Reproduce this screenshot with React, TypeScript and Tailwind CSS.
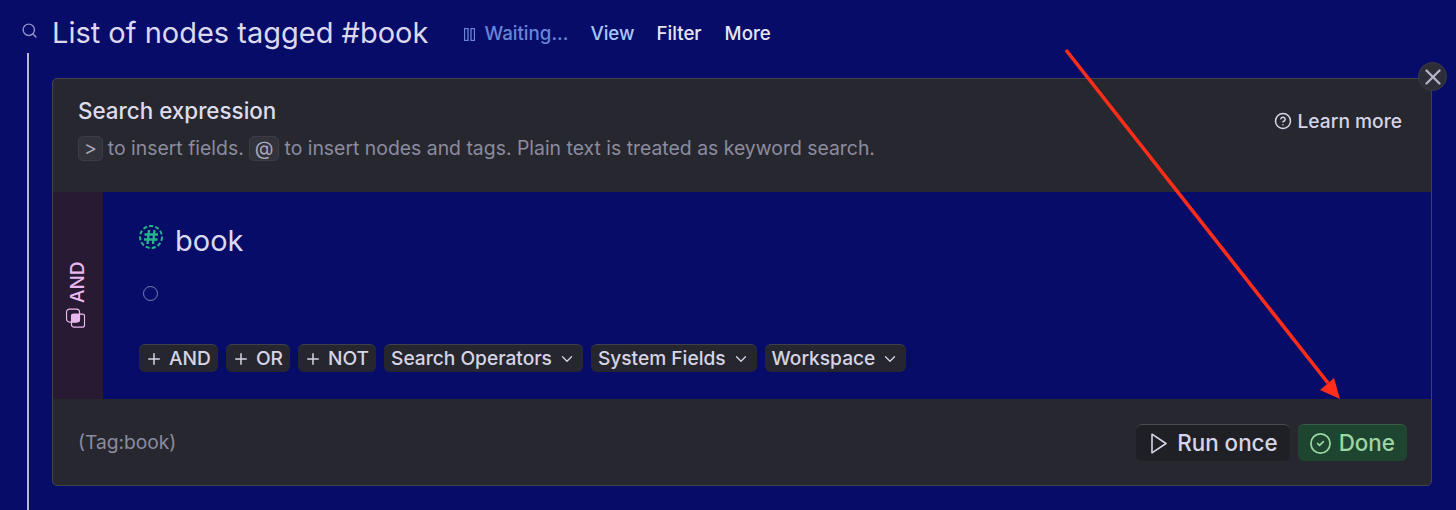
import { ChevronDown, CircleCheck, CircleHelp, Plus, Search, X } from "lucide-react";

const font = { fontFamily: "Inter, 'Liberation Sans', sans-serif" };

const addButtons = ["AND", "OR", "NOT"];
const menuButtons = ["Search Operators", "System Fields", "Workspace"];

function Key({ children }: { children: string }) {
  return (
    <span className="inline-flex h-[25px] items-center justify-center rounded-[5px] border border-[#3c3d46] bg-[#31323a] px-[5px] text-[#a9a8bb]">
      {children}
    </span>
  );
}

function TagIcon() {
  return (
    <svg width="26" height="26" viewBox="0 0 26 26" fill="none" className="mt-[-8px] text-[#26b58a]">
      <circle cx="13" cy="13" r="11" stroke="currentColor" strokeWidth="2" strokeDasharray="4 2.2" />
      <path d="M11 6 9.5 20M16.5 6 15 20M6.5 10.5h13.5M6 15.5h13.5" stroke="currentColor" strokeWidth="2.3" />
    </svg>
  );
}

function AndIcon() {
  return (
    <svg width="20" height="20" viewBox="0 0 20 20" fill="none" className="text-[#eab8f0]">
      <rect x="1" y="1" width="13" height="13" rx="3" stroke="currentColor" strokeWidth="1.2" />
      <rect x="6" y="6" width="13" height="13" rx="2" stroke="currentColor" strokeWidth="1.2" />
      <rect x="6" y="6" width="8" height="8" fill="currentColor" />
    </svg>
  );
}

function Chip({ children }: { children: React.ReactNode }) {
  return (
    <button
      type="button"
      className="flex h-[28px] items-center rounded-[6px] border-t border-[#3f404a] bg-[#26272e] px-[7px] text-[19.15px] font-medium text-[#d6d4e6]"
    >
      {children}
    </button>
  );
}

export default function App() {
  return (
    <div className="relative h-[510px] w-[1456px] overflow-hidden bg-[#060c68]" style={font}>
      <div className="flex h-[78px] items-start pt-[14px]">
        <div className="flex w-[52px] justify-end pr-[14px] pt-[8px]">
          <Search size={17} className="text-[#9090c8]" />
        </div>
        <h1 className="text-[29px] leading-[38px] font-normal text-[#dbd9f0]">List of nodes tagged #book</h1>
        <div className="ml-[36px] flex h-[38px] items-center pt-[2px] text-[18.7px] font-medium">
          <svg width="11" height="13" viewBox="0 0 11 13" fill="none" className="text-[#6a84d8]">
            <rect x="0.5" y="0.5" width="3.5" height="12" stroke="currentColor" strokeWidth="1.3" />
            <rect x="7" y="0.5" width="3.5" height="12" stroke="currentColor" strokeWidth="1.3" />
          </svg>
          <span className="ml-[9px] text-[#6a84d8]">Waiting...</span>
          <span className="ml-[22px] text-[#a9c6f8]">View</span>
          <span className="ml-[22px] text-[#e6e4f5]">Filter</span>
          <span className="ml-[23px] text-[#e6e4f5]">More</span>
        </div>
      </div>

      <div className="flex">
        <div className="ml-[27px] mt-[-25px] h-[457px] w-[2px] bg-[#b9b8d0]" />
        <div className="relative ml-[23px] w-[1380px]">
          <div className="flex h-[408px] flex-col overflow-hidden rounded-[5px] border border-[#42434f] bg-[#27282f]">
            <div className="flex h-[113px] justify-between px-[25px] pt-[18px]">
              <div>
                <div className="text-[22.4px] leading-[28px] font-medium text-[#dedcec]">Search expression</div>
                <div className="mt-[11px] flex items-center gap-[5px] text-[19.4px] leading-[25px] text-[#8c8b9f]">
                  <Key>{">"}</Key>
                  <span>to insert fields.</span>
                  <Key>@</Key>
                  <span>to insert nodes and tags. Plain text is treated as keyword search.</span>
                </div>
              </div>
              <div className="mr-[4px] mt-[10px] flex h-[28px] items-center gap-[6px] text-[19.2px] font-medium text-[#d6d4e6]">
                <CircleHelp size={18} />
                Learn more
              </div>
            </div>

            <div className="flex h-[207px] bg-[#060c68]">
              <div className="flex w-[50px] items-center justify-center bg-[#291a33] text-[#eab8f0]">
                <div className="flex -rotate-90 items-center gap-[6px] text-[19px] font-medium">
                  <span className="translate-x-[1px] -translate-y-[2px] rotate-90">
                    <AndIcon />
                  </span>
                  AND
                </div>
              </div>
              <div className="pl-[35px] pt-[31px]">
                <div className="flex h-[36px] items-center gap-[11px] text-[29px] text-[#dbd9f0]">
                  <TagIcon />
                  book
                </div>
                <div className="ml-[5px] mt-[27px] h-[15px] w-[15px] rounded-full border border-[#7c7fb6]" />
                <div className="ml-[1px] mt-[43px] flex gap-[8px]">
                  {addButtons.map((label) => (
                    <Chip key={label}>
                      <Plus size={18} className="ml-[-1px] mr-[6px]" />
                      {label}
                    </Chip>
                  ))}
                  {menuButtons.map((label) => (
                    <Chip key={label}>
                      {label}
                      <ChevronDown size={18} strokeWidth={1.75} className="ml-[6px]" />
                    </Chip>
                  ))}
                </div>
              </div>
            </div>

            <div className="flex flex-1 items-center justify-between pl-[25px] pr-[24px]">
              <span className="text-[19.2px] text-[#8c8b9f]">(Tag:book)</span>
              <div className="flex gap-[8px] text-[22.4px] font-medium">
                <button type="button" className="flex h-[37px] items-center gap-[10px] rounded-[6px] border-t border-[#4a4b55] bg-[#1f2026] pl-[15px] pr-[12px] pt-[1px] text-[#d6d4e6]">
                  <svg width="16" height="21" viewBox="0 0 16 21" fill="none">
                    <path d="M1 1.2 15 10.5 1 19.8Z" stroke="currentColor" strokeWidth="1.6" strokeLinejoin="round" />
                  </svg>
                  Run once
                </button>
                <button type="button" className="flex h-[37px] items-center gap-[7px] rounded-[6px] border-t border-[#3a5d47] bg-[#1e4530] pl-[11px] pr-[12px] pt-[1px] text-[#9bd6a3]">
                  <CircleCheck size={23} strokeWidth={1.8} />
                  Done
                </button>
              </div>
            </div>
          </div>
          <div className="absolute right-[-15px] top-[-16px] flex h-[29px] w-[29px] items-center justify-center rounded-full border border-[#3a3b45] bg-[#2d2e38] text-[#b3b2c8]">
            <X size={26} strokeWidth={2.2} />
          </div>
        </div>
      </div>

      <svg className="absolute left-0 top-0" width="1456" height="510" fill="none">
        <path d="M1066 50 1328 383" stroke="#ff2d1a" strokeWidth="3.6" />
        <path d="M1340 399 1320 390 1334 378Z" fill="#ff2d1a" />
      </svg>
    </div>
  );
}
